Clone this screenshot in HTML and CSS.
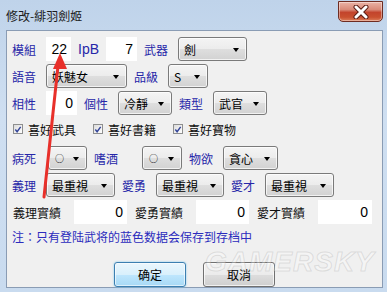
FILE: index.html
```html
<!DOCTYPE html>
<html>
<head>
	<meta charset="utf-8">
	<title>修改-緋羽劍姬</title>
	<link rel="stylesheet" href="styles.css">
</head>
<body>
	<div class="window">
		<div class="titlebar">
			<span class="title">修改-緋羽劍姬</span>
			<div class="close">
				<svg width="20" height="14" viewBox="0 0 20 14">
					<path d="M5 2 L15 12 M15 2 L5 12" stroke="#5a1d14" stroke-width="5" stroke-linecap="round"/>
					<path d="M5 2 L15 12 M15 2 L5 12" stroke="#fff" stroke-width="3" stroke-linecap="round"/>
				</svg>
			</div>
		</div>
		<div class="client">
			<div class="row">
				<span class="lbl">模組</span><span class="num w25">22</span>
				<span class="lbl lat">IpB</span><span class="num w31">7</span>
				<span class="lbl">武器</span><span class="combo w69">劍<i></i></span>
			</div>
			<div class="row">
				<span class="lbl">語音</span><span class="combo w81">妖魅女<i></i></span>
				<span class="lbl">品級</span><span class="combo w40">S<i></i></span>
			</div>
			<div class="row">
				<span class="lbl">相性</span><span class="num w31">0</span>
				<span class="lbl">個性</span><span class="combo w54">冷靜<i></i></span>
				<span class="lbl">類型</span><span class="combo w54">武官<i></i></span>
			</div>
			<div class="row checks">
				<label class="chk"><span class="box"><svg width="9" height="9" viewBox="0 0 9 9"><path d="M1.5 4.5 L3.5 7 L7.5 1.5" fill="none" stroke="#34459a" stroke-width="1.6"/></svg></span>喜好武具</label>
				<label class="chk"><span class="box"><svg width="9" height="9" viewBox="0 0 9 9"><path d="M1.5 4.5 L3.5 7 L7.5 1.5" fill="none" stroke="#34459a" stroke-width="1.6"/></svg></span>喜好書籍</label>
				<label class="chk"><span class="box"><svg width="9" height="9" viewBox="0 0 9 9"><path d="M1.5 4.5 L3.5 7 L7.5 1.5" fill="none" stroke="#34459a" stroke-width="1.6"/></svg></span>喜好寶物</label>
			</div>
			<div class="row">
				<span class="lbl">病死</span><span class="combo w39 first"><b class="dot">○</b><i></i></span>
				<span class="lbl">嗜酒</span><span class="combo w40 far"><b class="dot">○</b><i></i></span>
				<span class="lbl">物欲</span><span class="combo w55">貪心<i></i></span>
			</div>
			<div class="row">
				<span class="lbl">義理</span><span class="combo w69">最重視<i></i></span>
				<span class="lbl">愛勇</span><span class="combo w68">最重視<i></i></span>
				<span class="lbl">愛才</span><span class="combo w69">最重視<i></i></span>
			</div>
			<div class="row">
				<span class="lbl black">義理實績</span><span class="num w53">0</span>
				<span class="lbl black">愛勇實績</span><span class="num w53">0</span>
				<span class="lbl black">愛才實績</span><span class="num w54">0</span>
			</div>
			<div class="note">注：只有登陆武将的蓝色数据会保存到存档中</div>
			<div class="buttons">
				<span class="btn default">确定</span>
				<span class="btn">取消</span>
			</div>
		</div>
	</div>
	<div class="watermark">GAMERSKY</div>
	<svg class="arrow" width="387" height="292" viewBox="0 0 387 292">
		<path d="M44 197 L58 66" stroke="#e8302a" stroke-width="3" stroke-linecap="round"/>
		<path d="M60 53 L53 69 L67 69 Z" fill="#e8302a"/>
	</svg>
</body>
</html>
```

FILE: styles.css
```css
* {
	box-sizing: border-box;
}
body {
	margin: 0;
	width: 387px;
	height: 292px;
	overflow: hidden;
	position: relative;
	font-family: "Noto Sans CJK TC", "Noto Sans CJK SC", sans-serif;
	font-size: 12px;
}
.window {
	width: 387px;
	height: 292px;
	padding: 0 4px 4px 6px;
	background: linear-gradient(#bfd3ea, #cfdff1 40%, #c9dbef);
	display: flex;
	flex-direction: column;
}
.titlebar {
	height: 31px;
	display: flex;
	justify-content: space-between;
	align-items: flex-start;
}
.title {
	margin-top: 8px;
	color: #1b1b1b;
	font-size: 12px;
	line-height: 16px;
}
.close {
	width: 45px;
	height: 21px;
	margin-top: 1px;
	border: 1px solid #6e2c22;
	border-radius: 0 0 5px 5px;
	background: linear-gradient(#eab3a6, #d98a78 40%, #c3442c 55%, #c9502f 80%, #dd7f5c);
	box-shadow: inset 0 0 0 1px rgba(255,255,255,.4);
	display: flex;
	align-items: center;
	justify-content: center;
}
.client {
	flex: 1;
	background: #f0f0f0;
	border: 1px solid #8a9cb4;
	padding: 6px 0 0 5px;
	display: flex;
	flex-direction: column;
}
.row {
	display: flex;
	align-items: center;
	height: 24px;
	margin-bottom: 3px;
}
.lbl {
	color: #2626a8;
	margin-right: 10px;
	white-space: nowrap;
}
.lbl.lat {
	font-family: "Liberation Sans", sans-serif;
	font-size: 14px;
	width: 19px;
	margin-right: 9px;
}
.lbl.black {
	color: #111;
	margin-right: 13px;
	margin-left: 1px;
}
.num {
	height: 24px;
	background: #fff;
	margin-right: 7px;
	text-align: right;
	padding-right: 4px;
	font-family: "Liberation Sans", sans-serif;
	font-size: 14px;
	line-height: 24px;
	color: #000;
}
.combo {
	position: relative;
	height: 24px;
	margin-right: 7px;
	border: 1px solid #7a7a7a;
	border-radius: 3px;
	background: linear-gradient(#f4f4f4, #ececec 50%, #dedede 52%, #d2d2d2);
	box-shadow: inset 0 0 0 1px rgba(255,255,255,.7);
	padding-left: 5px;
	display: flex;
	align-items: center;
	color: #000;
	white-space: nowrap;
	overflow: hidden;
}
.combo i {
	position: absolute;
	right: 7px;
	top: 10px;
	border-left: 3.5px solid transparent;
	border-right: 3.5px solid transparent;
	border-top: 4px solid #000;
}
.dot {
	font-weight: normal;
	font-size: 9px;
	margin-left: 1px;
}
.combo.first { margin-left: 2px; }
.combo.far { margin-left: 14px; }
.w25 { width: 25px; }
.w31 { width: 31px; }
.w39 { width: 39px; }
.w40 { width: 40px; }
.w53 { width: 53px; }
.w54 { width: 54px; }
.w55 { width: 55px; }
.w68 { width: 68px; }
.w69 { width: 69px; }
.w81 { width: 81px; }
.checks {
	height: 20px;
	margin: 1px 0 7px 1px;
}
.chk {
	display: flex;
	align-items: center;
	margin-right: 17px;
	color: #111;
}
.box {
	width: 10px;
	height: 10px;
	border: 1px solid #8e8f8f;
	background: linear-gradient(135deg, #dcdcdc, #fff);
	margin-right: 5px;
	display: flex;
	align-items: center;
	justify-content: center;
}
.note {
	color: #2b2bbd;
	height: 14px;
	line-height: 14px;
	margin-top: 3px;
}
.buttons {
	display: flex;
	justify-content: center;
	gap: 17px;
	margin-top: 18px;
	padding-right: 5px;
}
.btn {
	width: 72px;
	height: 25px;
	border: 1px solid #707070;
	border-radius: 3px;
	background: linear-gradient(#f2f2f2, #ebebeb 50%, #dddddd 52%, #cfcfcf);
	box-shadow: inset 0 0 0 1px rgba(255,255,255,.7);
	display: flex;
	align-items: center;
	justify-content: center;
	color: #000;
}
.btn.default {
	border-color: #3c7fb1;
	background: linear-gradient(#eaf6fd, #d9f0fc 50%, #bee6fd 52%, #a7d9f5);
	box-shadow: inset 0 0 0 1px rgba(255,255,255,.6), 0 0 2px #6ec6f0;
}
.watermark {
	position: absolute;
	left: 205px;
	top: 246px;
	font-family: "Liberation Sans", sans-serif;
	font-weight: bold;
	font-style: italic;
	font-size: 28px;
	letter-spacing: 1px;
	color: rgba(255,255,255,.3);
	-webkit-text-stroke: 1px rgba(150,150,150,.25);
	pointer-events: none;
}
.arrow {
	position: absolute;
	left: 0;
	top: 0;
	pointer-events: none;
}
```
